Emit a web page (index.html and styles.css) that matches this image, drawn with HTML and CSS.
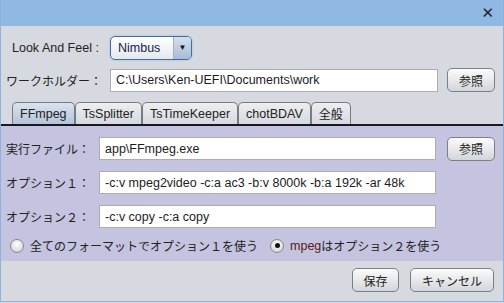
FILE: index.html
```html
<!DOCTYPE html>
<html lang="ja">
<head>
  <meta charset="UTF-8">
  <title>設定</title>
  <link rel="stylesheet" href="styles.css">
</head>
<body>

<div class="window">
  <div class="titlebar">
    <span class="close">✕</span>
  </div>

  <div class="top">
    <div class="row laf-row">
      <span class="label laf-label">Look And Feel :</span>
      <div class="combo">
        <span class="combo-text">Nimbus</span>
        <span class="combo-arrow">▼</span>
      </div>
    </div>
    <div class="row folder-row">
      <span class="label folder-label">ワークホルダー：</span>
      <div class="field folder-field">C:\Users\Ken-UEFI\Documents\work</div>
      <button class="btn ref-btn">参照</button>
    </div>
  </div>

  <div class="tabs">
    <div class="tab active">FFmpeg</div>
    <div class="tab">TsSplitter</div>
    <div class="tab">TsTimeKeeper</div>
    <div class="tab">chotBDAV</div>
    <div class="tab jp">全般</div>
  </div>

  <div class="panel">
    <div class="prow">
      <span class="label plabel">実行ファイル：</span>
      <div class="field pfield">app\FFmpeg.exe</div>
      <button class="btn ref-btn">参照</button>
    </div>
    <div class="prow">
      <span class="label plabel">オプション１：</span>
      <div class="field pfield">-c:v mpeg2video -c:a ac3 -b:v 8000k -b:a 192k -ar 48k</div>
    </div>
    <div class="prow">
      <span class="label plabel">オプション２：</span>
      <div class="field pfield">-c:v copy -c:a copy</div>
    </div>
    <div class="radios">
      <label class="radio"><span class="dot"></span>全てのフォーマットでオプション１を使う</label>
      <label class="radio checked"><span class="dot"></span><span class="mpeg">mpeg</span>はオプション２を使う</label>
    </div>
  </div>

  <div class="footer">
    <button class="btn save-btn">保存</button>
    <button class="btn cancel-btn">キャンセル</button>
  </div>
</div>

</body>
</html>
```

FILE: styles.css
```css
html, body {
  margin: 0;
  padding: 0;
  background: #d6d9e0;
}

.window {
  width: 504px;
  height: 302px;
  box-sizing: border-box;
  border: 1px solid #8ab3dd;
  border-top: none;
  background: #d6d9e0;
  font-family: "Liberation Sans", "Noto Sans CJK JP", sans-serif;
  font-size: 12.5px;
  color: #000;
  display: flex;
  flex-direction: column;
}

.titlebar {
  height: 26px;
  background: #8fb9e3;
  display: flex;
  justify-content: flex-end;
  align-items: center;
  padding-right: 9px;
}
.close {
  font-size: 15px;
  color: #222;
  font-family: "DejaVu Sans", sans-serif;
}

.label {
  font-family: "Noto Sans CJK JP", sans-serif;
  font-size: 12px;
  white-space: nowrap;
}

.top {
  padding: 9px 8px 0 5px;
}

.row {
  display: flex;
  align-items: center;
}

.laf-row {
  height: 25px;
}
.laf-label {
  font-family: "Liberation Sans", sans-serif;
  font-size: 12.5px;
  padding-left: 6px;
  width: 98px;
  color: #222;
}

.combo {
  width: 82px;
  height: 24px;
  box-sizing: border-box;
  border: 1px solid #3f6da8;
  border-radius: 5px;
  background: linear-gradient(#ffffff, #e4e8ee);
  display: flex;
  align-items: center;
  overflow: hidden;
  box-shadow: 0 0 2px #8fb1da;
}
.combo-text {
  flex: 1;
  padding-left: 7px;
  font-size: 12.5px;
  color: #16234a;
}
.combo-arrow {
  width: 17px;
  height: 100%;
  font-size: 8px;
  display: flex;
  align-items: center;
  justify-content: center;
  background: linear-gradient(#d6e0ec, #a9bbd3);
  border-left: 1px solid #9fb2cc;
  color: #111;
}

.folder-row {
  margin-top: 8px;
  height: 24px;
}
.folder-label {
  width: 104px;
  color: #222;
}

.field {
  height: 23px;
  box-sizing: border-box;
  border: 1px solid #a9adb4;
  background: #fff;
  padding-left: 5px;
  display: flex;
  align-items: center;
  font-size: 12.5px;
  color: #1c1c1c;
  white-space: nowrap;
  overflow: hidden;
}
.folder-field {
  width: 328px;
}

.btn {
  font-family: "Noto Sans CJK JP", sans-serif;
  font-size: 12px;
  color: #222;
  height: 24px;
  border: 1px solid #7b7f86;
  border-radius: 5px;
  background: linear-gradient(#fbfbfc, #e3e5e8 60%, #d2d5da);
  padding: 0;
}
.ref-btn {
  width: 48px;
  margin-left: auto;
}

.tabs {
  display: flex;
  margin-top: 10px;
  padding-left: 11px;
  height: 24px;
  border-bottom: 2px solid #181822;
  box-sizing: border-box;
  align-items: flex-end;
}
.tab {
  height: 22px;
  box-sizing: border-box;
  border: 1px solid #787c82;
  border-bottom: none;
  border-radius: 5px 5px 0 0;
  padding: 0 7px;
  display: flex;
  align-items: center;
  font-size: 12.5px;
  color: #222;
  background: linear-gradient(#eceef1, #d6d9e0);
}
.tab.jp {
  font-family: "Noto Sans CJK JP", sans-serif;
  font-size: 12px;
}
.tab.active {
  background: linear-gradient(#dbe3ee, #b3c4da);
}

.panel {
  background: #c4c3e0;
  padding: 11px 8px 7px 5px;
  display: flex;
  flex-direction: column;
  gap: 11px;
}
.prow {
  display: flex;
  align-items: center;
  height: 23px;
}
.plabel {
  width: 93px;
  color: #222;
}
.pfield {
  width: 337px;
}

.radios {
  display: flex;
  gap: 12px;
  margin-top: -2px;
  padding-left: 4px;
}
.radio {
  display: flex;
  align-items: center;
  font-family: "Noto Sans CJK JP", sans-serif;
  font-size: 12px;
  color: #222;
}
.dot {
  width: 12px;
  height: 12px;
  border-radius: 50%;
  border: 1px solid #888;
  background: radial-gradient(circle at 50% 35%, #ffffff, #c9ccd2);
  margin-right: 6px;
  position: relative;
}
.radio.checked .dot::after {
  content: "";
  position: absolute;
  left: 3.5px;
  top: 3.5px;
  width: 5px;
  height: 5px;
  border-radius: 50%;
  background: #111;
}
.mpeg {
  color: #5a1a1a;
  font-family: "Liberation Sans", sans-serif;
  font-size: 12.5px;
}

.footer {
  display: flex;
  justify-content: flex-end;
  gap: 11px;
  padding: 7px 9px 0 0;
}
.save-btn {
  width: 47px;
}
.cancel-btn {
  width: 84px;
}
```
